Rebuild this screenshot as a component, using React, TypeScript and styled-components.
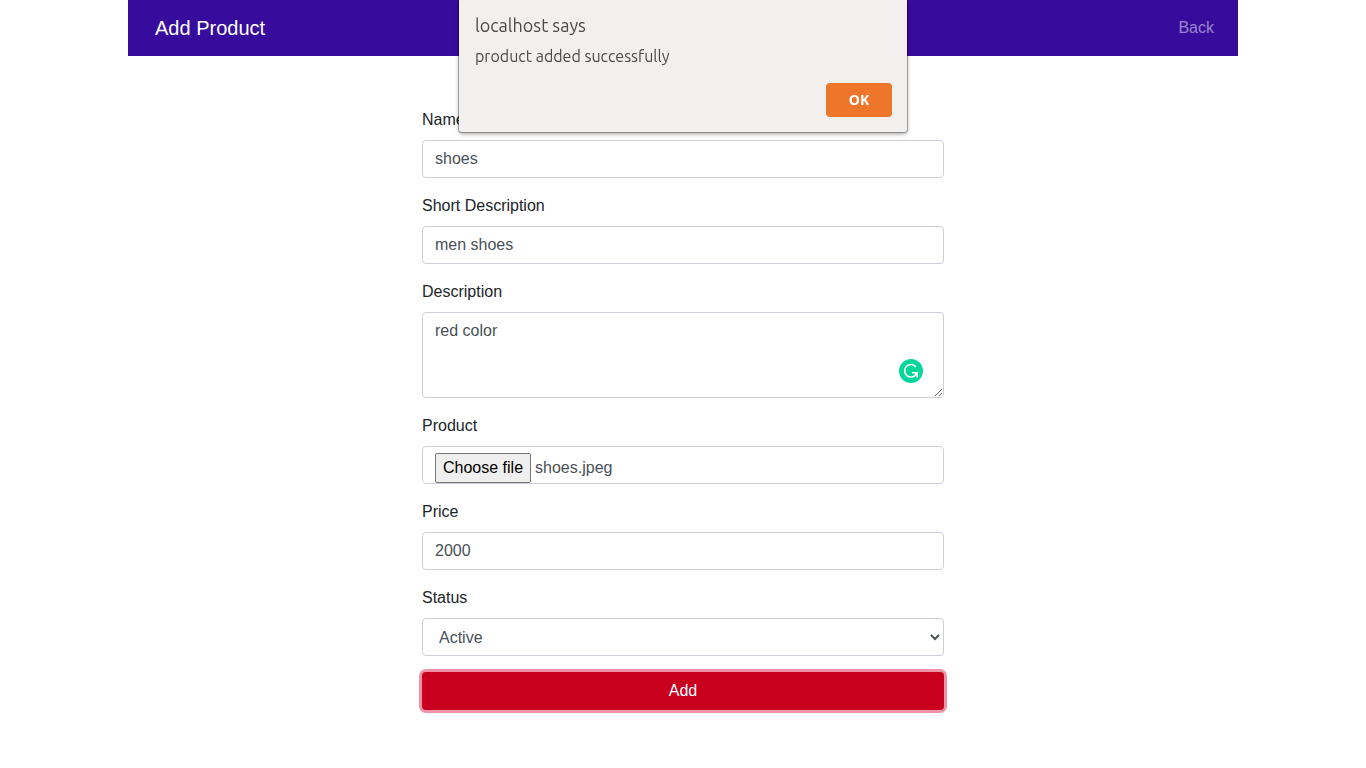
import React, { useState } from 'react';
import styled, { createGlobalStyle, css } from 'styled-components';

const GlobalStyle = createGlobalStyle`
  *, *::before, *::after { box-sizing: border-box; }
  body {
    margin: 0;
    background: #fff;
    color: #212529;
    font: 400 16px/24px "Liberation Sans", Arial, sans-serif;
  }
`;

const Container = styled.div`
  width: 100%;
  max-width: 1140px;
  margin: 0 auto;
  padding: 0 15px 24px;
`;

const Navbar = styled.nav`
  display: flex;
  align-items: center;
  justify-content: space-between;
  height: 56px;
  padding: 0 24px 0 27px;
  background: #370c9c;
`;

const Brand = styled.a`
  color: #fff;
  font-size: 20px;
  line-height: 30px;
  text-decoration: none;
`;

const NavLink = styled.a`
  color: rgba(255, 255, 255, 0.5);
  text-decoration: none;
`;

const Form = styled.form`
  display: flex;
  flex-direction: column;
  gap: 16px;
  max-width: 522px;
  margin: 52px auto 0;
`;

const Group = styled.div`
  display: flex;
  flex-direction: column;
  gap: 8px;
`;

const Label = styled.label`
  align-self: flex-start;
`;

const control = css`
  display: block;
  width: 100%;
  height: 38px;
  margin: 0;
  padding: 6px 12px;
  border: 1px solid #cfcfdb;
  border-radius: 4px;
  background: #fff;
  color: #495057;
  font: inherit;
`;

const Input = styled.input`
  ${control}
`;

const TextArea = styled.textarea`
  ${control}
  height: auto;
  resize: vertical;
`;

const Select = styled.select`
  ${control}
`;

const TextAreaWrap = styled.div`
  position: relative;
`;

const AssistantBadge = styled.svg`
  position: absolute;
  right: 21px;
  bottom: 15px;
  width: 24px;
  height: 24px;
`;

const FileControl = styled.div`
  ${control}
  position: relative;
  display: flex;
  align-items: flex-start;
  gap: 4px;
`;

const FileInput = styled.input`
  position: absolute;
  width: 1px;
  height: 1px;
  opacity: 0;
`;

const FileButton = styled.label`
  padding: 2px 7px;
  border: 1px solid #767676;
  border-radius: 2px;
  background: #efefef;
  color: #000;
`;

const FileName = styled.span`
  padding-top: 3px;
`;

const SubmitButton = styled.button`
  height: 38px;
  border: 0;
  border-radius: 4px;
  background: #c8001e;
  color: #fff;
  font: inherit;
  box-shadow: 0 0 0 3px #f093a9;
`;

const Alert = styled.div`
  position: fixed;
  top: 0;
  left: 50%;
  z-index: 10;
  display: flex;
  flex-direction: column;
  width: 448px;
  max-width: 100%;
  padding: 12px 15px 15px 16px;
  transform: translateX(-50%);
  border-radius: 0 0 3px 3px;
  background: #f2f0ee;
  color: #4a4a4a;
  font-family: Ubuntu, "Noto Sans", sans-serif;
  box-shadow: 0 0 1px 1px rgba(0, 0, 0, 0.3), 0 2px 4px rgba(0, 0, 0, 0.35);
`;

const AlertTitle = styled.h2`
  margin: 0;
  font-size: 18px;
  font-weight: 400;
  line-height: 26px;
`;

const AlertMessage = styled.p`
  margin: 6px 0 14px;
  font-size: 16px;
  line-height: 25px;
`;

const AlertButton = styled.button`
  align-self: flex-end;
  width: 66px;
  height: 34px;
  border: 0;
  border-radius: 4px;
  background: #ee762a;
  color: #fff;
  font: 700 14px/20px "Open Sans", "Noto Sans", sans-serif;
`;

export default function App() {
  const [fileName, setFileName] = useState('shoes.jpeg');
  const [alertOpen, setAlertOpen] = useState(true);

  return (
    <>
      <GlobalStyle />
      <Container>
        <Navbar>
          <Brand href="#">Add Product</Brand>
          <NavLink href="#">Back</NavLink>
        </Navbar>
        <Form
          onSubmit={(e: React.FormEvent) => {
            e.preventDefault();
            setAlertOpen(true);
          }}
        >
          <Group>
            <Label htmlFor="name">Name</Label>
            <Input id="name" type="text" defaultValue="shoes" />
          </Group>
          <Group>
            <Label htmlFor="short">Short Description</Label>
            <Input id="short" type="text" defaultValue="men shoes" />
          </Group>
          <Group>
            <Label htmlFor="description">Description</Label>
            <TextAreaWrap>
              <TextArea id="description" rows={3} defaultValue="red color" />
              <AssistantBadge viewBox="0 0 24 24" aria-hidden="true">
                <circle cx="12" cy="12" r="12" fill="#04d69c" />
                <path
                  d="M16.9 7.9A6.3 6.3 0 1 0 17.2 15.2"
                  fill="none"
                  stroke="#fff"
                  strokeWidth="1.6"
                />
                <path
                  d="M13 13.8h5.2v4.8"
                  fill="none"
                  stroke="#fff"
                  strokeWidth="1.6"
                />
                <path d="M15.4 14h3v3.4z" fill="#fff" />
              </AssistantBadge>
            </TextAreaWrap>
          </Group>
          <Group>
            <Label htmlFor="file">Product</Label>
            <FileControl>
              <FileInput
                id="file"
                type="file"
                onChange={(e: React.ChangeEvent<HTMLInputElement>) =>
                  setFileName(e.target.files?.[0]?.name ?? 'No file chosen')
                }
              />
              <FileButton htmlFor="file">Choose file</FileButton>
              <FileName>{fileName}</FileName>
            </FileControl>
          </Group>
          <Group>
            <Label htmlFor="price">Price</Label>
            <Input id="price" type="text" defaultValue="2000" />
          </Group>
          <Group>
            <Label htmlFor="status">Status</Label>
            <Select id="status" defaultValue="active">
              <option value="active">Active</option>
              <option value="inactive">Inactive</option>
            </Select>
          </Group>
          <SubmitButton type="submit">Add</SubmitButton>
        </Form>
      </Container>
      {alertOpen && (
        <Alert role="alertdialog" aria-labelledby="alert-title" aria-describedby="alert-message">
          <AlertTitle id="alert-title">localhost says</AlertTitle>
          <AlertMessage id="alert-message">product added successfully</AlertMessage>
          <AlertButton type="button" onClick={() => setAlertOpen(false)}>
            OK
          </AlertButton>
        </Alert>
      )}
    </>
  );
}
